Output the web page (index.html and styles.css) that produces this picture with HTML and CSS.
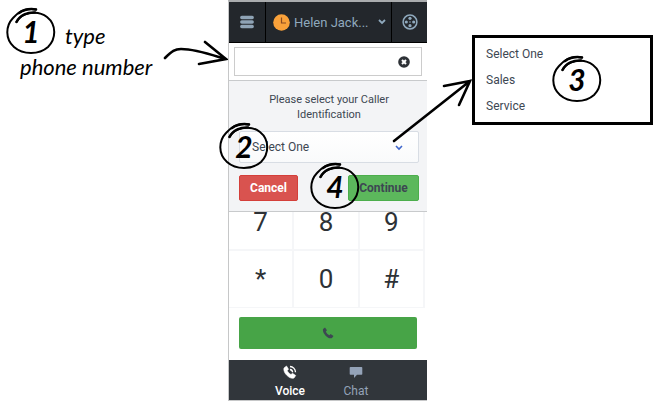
FILE: index.html
```html
<!DOCTYPE html>
<html lang="en">
<head>
    <meta charset="UTF-8">
    <title>Placing a call</title>
    <link rel="stylesheet" href="styles.css">
</head>
<body>
    <!-- hand drawn ring shared by all step numbers -->
    <svg class="defs" aria-hidden="true">
        <symbol id="ring" viewBox="0 0 50 48">
            <path d="M10.500 15 C15 6 31 2 41 10 C51 18 50 32 42 40 C33 48 17 48 8 40 C-1 32 -.5 19 7 11 C14 3 22 1 30 2.500" fill="none" stroke="#000" stroke-width="2" stroke-linecap="round"/>
            <path d="M13 6C18 2.500 24 1.500 30 2.500M10.500 15C14 8 22 5 29 5.500" fill="none" stroke="#000" stroke-width="2.500" stroke-linecap="round"/>
        </symbol>
    </svg>

    <div class="guide">
        <div class="notes">
            <div class="note-line">
                <span class="step"><svg class="ring"><use href="#ring"/></svg>1</span>
                <span>type</span>
            </div>
            <div class="note-text">phone number</div>
            <svg class="arrow-input" viewBox="0 0 66 28">
                <path d="M3 20 C10 13 13 11 19 11 C34 11 50 17 63 21 M43 4 L64 21 L37 26" fill="none" stroke="#000" stroke-width="2.600" stroke-linecap="round"/>
            </svg>
        </div>

        <main class="phone">
            <header class="topbar">
                <button class="menu" type="button" aria-label="Menu">
                    <svg width="14" height="14" viewBox="0 0 14 14"><path d="M1.800 2.500H12.200M1.800 7H12.200M1.800 11.500H12.200" stroke="#8fa3b5" stroke-width="3.400" stroke-linecap="round"/></svg>
                </button>
                <button class="account" type="button">
                    <svg width="17" height="17" viewBox="0 0 17 17"><circle cx="8.500" cy="8.500" r="8.300" fill="#f9a13a"/><path d="M8.500 3.500V9H13" fill="none" stroke="#8a4a20" stroke-width="1.200"/></svg>
                    <span class="account-name">Helen Jack...</span>
                    <svg width="8" height="6" viewBox="0 0 8 6"><path d="M1 1L4 4L7 1" fill="none" stroke="#8fa9bd" stroke-width="1.800"/></svg>
                </button>
                <button class="keypad-toggle" type="button" aria-label="Keypad">
                    <svg width="16" height="16" viewBox="0 0 16 16"><circle cx="8" cy="8" r="6.900" fill="none" stroke="#8fa9bd" stroke-width="1.500"/><g fill="#8fa9bd"><circle cx="8" cy="4.300" r="1.600"/><circle cx="4.300" cy="8" r="1.600"/><circle cx="11.700" cy="8" r="1.600"/><circle cx="8" cy="11.700" r="1.600"/><circle cx="8" cy="8" r=".8"/></g></svg>
                </button>
            </header>

            <div class="number">
                <input class="number-input" type="text" aria-label="Phone number">
                <button class="clear" type="button" aria-label="Clear">
                    <svg width="12" height="12" viewBox="0 0 12 12"><circle cx="6" cy="6" r="5.800" fill="#2d3136"/><path d="M4 4L8 8M8 4L4 8" stroke="#fff" stroke-width="2"/></svg>
                </button>
            </div>

            <section class="caller">
                <label class="caller-label" for="caller-id">Please select your Caller Identification</label>
                <div class="select-wrap">
                    <select class="caller-select" id="caller-id">
                        <option>Select One</option>
                        <option>Sales</option>
                        <option>Service</option>
                    </select>
                    <svg class="select-arrow" width="8" height="6" viewBox="0 0 8 6"><path d="M1 1L4 4L7 1" fill="none" stroke="#3f66cc" stroke-width="1.600"/></svg>
                    <span class="step step-select"><svg class="ring"><use href="#ring"/></svg>2</span>
                </div>
                <div class="actions">
                    <button class="btn btn-cancel" type="button">Cancel</button>
                    <button class="btn btn-continue" type="button">Continue</button>
                    <span class="step step-continue"><svg class="ring"><use href="#ring"/></svg>4</span>
                </div>
            </section>

            <div class="keys">
                <button class="key key-cut" type="button">7</button>
                <button class="key key-cut" type="button">8</button>
                <button class="key key-cut" type="button">9</button>
                <button class="key" type="button">*</button>
                <button class="key" type="button">0</button>
                <button class="key" type="button">#</button>
            </div>

            <button class="call" type="button" aria-label="Call">
                <svg width="12" height="12" viewBox="0 0 12 12"><path d="M1 2L3 .5L5 3.300L3.800 4.500C4.300 6 5.800 7.500 7.400 8.200L8.600 7L11.500 9L10 11C7 13 0 6.500 1 2Z" fill="#3d4752"/></svg>
            </button>

            <nav class="tabs">
                <button class="tab tab-active" type="button">
                    <svg width="14" height="14" viewBox="0 0 14 14"><path d="M1 3L3.500 1L5.500 4.200L4.300 5.500C4.700 7 6.300 8.800 8 9.500L9.500 8.300L12.700 10.500L11 13C7.500 15 -.5 8 1 3Z" fill="#fff" stroke="#fff" stroke-width=".6" stroke-linejoin="round"/><path d="M7 4.500A3 3 0 0 1 9.600 7.200M7 1.500A6 6 0 0 1 12.500 7.200" fill="none" stroke="#fff" stroke-width="1.300"/></svg>
                    Voice
                </button>
                <button class="tab" type="button">
                    <svg width="14" height="14" viewBox="0 0 14 14"><path d="M1.500 2H12.500Q13.300 2 13.300 2.800V9Q13.300 9.800 12.500 9.800H8L5 13V9.800H1.500Q.7 9.800 .7 9V2.800Q.7 2 1.500 2Z" fill="#94a3b8"/></svg>
                    Chat
                </button>
            </nav>
        </main>

        <aside class="detail">
            <svg class="arrow-options" viewBox="0 0 82 66">
                <path d="M3 62L79 2M53 7L79 2L68 26" fill="none" stroke="#000" stroke-width="2.600" stroke-linecap="round"/>
            </svg>
            <ul class="options">
                <li>Select One</li>
                <li>Sales</li>
                <li>Service</li>
            </ul>
            <span class="step step-options"><svg class="ring"><use href="#ring"/></svg>3</span>
        </aside>
    </div>
</body>
</html>
```
FILE: styles.css
```css
* {
    box-sizing: border-box;
}

body {
    margin: 0;
    background: #fff;
    font-family: Roboto, sans-serif;
    font-size: 12px;
    color: #3d4752;
}

button {
    margin: 0;
    padding: 0;
    border: 0;
    background: none;
    font-family: inherit;
    color: inherit;
}

svg {
    flex: none;
}

.defs {
    position: absolute;
    width: 0;
    height: 0;
}

.guide {
    display: grid;
    grid-template-columns: minmax(0, 228fr) minmax(0, 199fr) minmax(0, 240fr);
}

/* handwritten notes */
.notes {
    position: relative;
    padding: 7px 0 0 6px;
    font-family: Lato, sans-serif;
    font-style: italic;
    font-size: 22px;
    color: #000;
}

.note-line {
    display: flex;
    align-items: center;
    gap: 9px;
}

.note-line span:last-child {
    padding-top: 8px;
}

.note-text {
    padding-left: 14px;
    line-height: 24px;
}

.step {
    position: relative;
    display: flex;
    align-items: center;
    justify-content: center;
    width: 50px;
    height: 48px;
    font-family: Lato, sans-serif;
    font-size: 30px;
    font-weight: bold;
    font-style: italic;
    color: #000;
}

.ring {
    position: absolute;
    inset: 0;
    width: 50px;
    height: 48px;
}

.arrow-input {
    position: absolute;
    top: 38px;
    right: 0;
    width: 66px;
}

/* phone */
.phone {
    border-top: 2px solid #aaacae;
    border-left: 1px solid #c6c7c8;
}

.topbar {
    display: flex;
    height: 41px;
    background: #23272c;
    border-bottom: 1px solid #000;
    color: #8fa9bd;
}

.topbar button {
    display: flex;
    align-items: center;
    justify-content: center;
}

.menu {
    width: 36px;
}

.account {
    flex: 1;
    gap: 4px;
    padding: 0 5px 0 7px;
    border-left: 1px solid #000;
    border-right: 1px solid #000;
    font-size: 13px;
}

.account-name {
    flex: 1;
    text-align: left;
}

.keypad-toggle {
    width: 35px;
}

.number {
    display: flex;
    align-items: center;
    height: 29px;
    margin: 4px 5px;
    padding-right: 11px;
    border: 1px solid #ccc;
}

.number-input {
    flex: 1;
    min-width: 0;
    height: 26px;
    border: 0;
    outline: 0;
    background: none;
    font-size: 14px;
}

.clear svg {
    display: block;
}

.caller {
    padding: 11px 8px 10px 10px;
    background: #f3f4f6;
    border-top: 1px solid #c8cacc;
    border-bottom: 1px solid #c8cacc;
}

.caller-label {
    display: block;
    padding: 0 20px;
    line-height: 15px;
    font-size: 11px;
    text-align: center;
}

.select-wrap {
    position: relative;
    margin: 9px 0 12px;
}

.caller-select {
    display: block;
    width: 100%;
    height: 32px;
    padding: 0 12px;
    appearance: none;
    border: 1px solid #d8dde4;
    border-radius: 2px;
    background: linear-gradient(#fff, #f9fafb);
    font-family: inherit;
    font-size: 12px;
    color: #3d4752;
}

.select-arrow {
    position: absolute;
    top: 14px;
    right: 16px;
}

.actions {
    position: relative;
    display: flex;
    justify-content: space-between;
}

.btn {
    height: 26px;
    border-radius: 2px;
    font-size: 12px;
    font-weight: bold;
}

.btn-cancel {
    width: 59px;
    background: #d9534f;
    border: 1px solid #d43f3a;
    color: #fff;
}

.btn-continue {
    width: 71px;
    background: #5cb85c;
    border: 1px solid #4cae4c;
}

.step-select,
.step-continue,
.step-options {
    position: absolute;
}

.step-select {
    top: -9px;
    left: -20px;
}

.step-continue {
    top: -13px;
    right: 59px;
}

/* keypad */
.keys {
    display: grid;
    grid-template-columns: repeat(3, 1fr);
    margin-right: 2px;
}

.key {
    height: 57px;
    border-right: 2px solid #f5f6f8;
    border-bottom: 1px solid #f5f6f8;
    font-size: 26px;
    color: #2d3136;
}

.key-cut {
    height: 39px;
    padding-bottom: 17px;
    border-bottom-width: 2px;
    line-height: 20px;
}

.call {
    display: flex;
    align-items: center;
    justify-content: center;
    width: calc(100% - 20px);
    height: 32px;
    margin: 9px 10px 11px;
    border-radius: 2px;
    background: #47a447;
}

.tabs {
    display: flex;
    justify-content: center;
    height: 41px;
    padding-right: 10px;
    background: #31363b;
    border-bottom: 1px solid #c6c7c8;
}

.tab {
    display: flex;
    flex-direction: column;
    align-items: center;
    gap: 4px;
    width: 66px;
    padding-top: 5px;
    font-size: 12px;
    line-height: 16px;
    color: #94a3b8;
}

.tab-active {
    font-weight: 500;
    color: #fff;
}

/* open list of caller ids */
.detail {
    position: relative;
    padding: 35px 14px 0 45px;
}

.options {
    margin: 0;
    padding: 3px 11px;
    border: 3px solid #000;
    list-style: none;
    line-height: 26px;
}

.arrow-options {
    position: absolute;
    top: 79px;
    left: -36px;
    width: 82px;
}

.step-options {
    top: 55px;
    left: 125px;
}
```
